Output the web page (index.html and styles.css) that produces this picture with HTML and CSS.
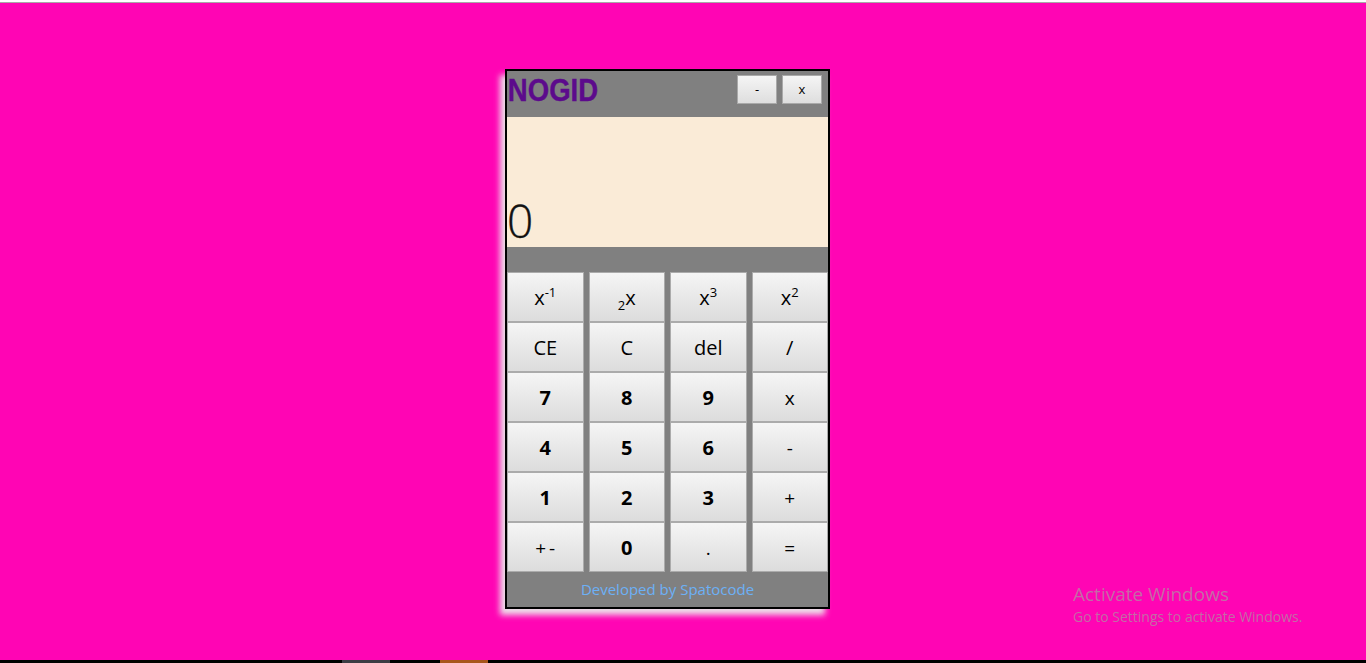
FILE: index.html
```html
<!DOCTYPE html>
<html>
<head>
<meta charset="utf-8">
<title>NOGID</title>
<link rel="stylesheet" href="styles.css">
</head>
<body>
<div class="topline"></div>
<main class="stage">
  <div class="calc">
    <header class="titlebar">
      <span class="logo">NOGID</span>
      <div class="winbtns">
        <button class="winbtn">-</button>
        <button class="winbtn">x</button>
      </div>
    </header>
    <section class="display"><span class="value">0</span></section>
    <div class="strip"></div>
    <div class="keys">
      <button class="key">x<sup>-1</sup></button>
      <button class="key"><sub>2</sub>x</button>
      <button class="key">x<sup>3</sup></button>
      <button class="key">x<sup>2</sup></button>
      <button class="key">CE</button>
      <button class="key">C</button>
      <button class="key">del</button>
      <button class="key">/</button>
      <button class="key num">7</button>
      <button class="key num">8</button>
      <button class="key num">9</button>
      <button class="key op">x</button>
      <button class="key num">4</button>
      <button class="key num">5</button>
      <button class="key num">6</button>
      <button class="key op">-</button>
      <button class="key num">1</button>
      <button class="key num">2</button>
      <button class="key num">3</button>
      <button class="key op">+</button>
      <button class="key op pm">+-</button>
      <button class="key num">0</button>
      <button class="key op">.</button>
      <button class="key op">=</button>
    </div>
    <footer class="credit">Developed by Spatocode</footer>
  </div>
</main>
<div class="watermark">
  <div class="wm-title">Activate Windows</div>
  <div class="wm-sub">Go to Settings to activate Windows.</div>
</div>
<div class="taskbar">
  <span class="task task-a"></span>
  <span class="task task-b"></span>
</div>
</body>
</html>
```

FILE: styles.css
```css
* { box-sizing: border-box; }
html, body { margin: 0; padding: 0; }
body {
  background: #ff05b4;
  height: 663px;
  display: flex;
  flex-direction: column;
  overflow: hidden;
  font-family: "Open Sans", "Noto Sans", sans-serif;
  position: relative;
}
.topline {
  height: 3px;
  background: #ffffff;
  border-bottom: 1px solid #a9a9a9;
  flex: none;
}
.stage {
  flex: 1;
  padding-top: 66px;
  padding-left: 505px;
}
.calc {
  width: 325px;
  height: 540px;
  border: 2px solid #000;
  background: #808080;
  display: flex;
  flex-direction: column;
  box-shadow: -5px 6px 6px rgba(235, 235, 235, 0.95);
}
.titlebar {
  height: 46px;
  flex: none;
  display: flex;
  align-items: flex-start;
  justify-content: space-between;
  background: #808080;
}
.logo {
  font-family: "Liberation Sans", Arial, sans-serif;
  font-weight: bold;
  font-size: 32px;
  color: #5c0a8c;
  line-height: 1;
  padding-top: 3px;
  padding-left: 1px;
  transform: scaleX(0.86);
  transform-origin: left center;
  -webkit-text-stroke: 0.4px #5c0a8c;
}
.winbtns {
  display: flex;
  gap: 5px;
  padding-top: 4px;
  padding-right: 6px;
}
.winbtn {
  width: 40px;
  height: 29px;
  border: 1px solid #a9a9a9;
  background: linear-gradient(#f5f5f5, #dedede);
  font-family: "Open Sans", sans-serif;
  font-size: 13px;
  color: #000;
  padding: 0;
  line-height: 1;
}
.display {
  height: 130px;
  flex: none;
  background: #faebd7;
  display: flex;
  align-items: flex-end;
  padding-bottom: 4px;
}
.value {
  font-family: "Open Sans", sans-serif;
  font-weight: 300;
  font-size: 46px;
  line-height: 46px;
  color: #111;
  -webkit-text-stroke: 0.4px #111;
}
.strip {
  height: 25px;
  flex: none;
  background: #808080;
}
.keys {
  height: 300px;
  flex: none;
  display: grid;
  grid-template-columns: repeat(4, 1fr);
  grid-template-rows: repeat(6, 50px);
  column-gap: 5px;
  background: #808080;
}
.key {
  border: 1px solid #ababab;
  background: linear-gradient(#f5f5f5, #dcdcdc);
  font-family: "Open Sans", sans-serif;
  font-size: 20px;
  color: #000;
  padding: 2px 0 0;
  line-height: 1;
}
.key.num { font-weight: 700; }
.key.op { font-size: 19px; }
.key.pm { letter-spacing: 3px; padding-left: 3px; }
.key sup { font-size: 13px; vertical-align: 8px; line-height: 0; }
.key sub { font-size: 13px; vertical-align: -5px; line-height: 0; }
.credit {
  flex: 1;
  display: flex;
  align-items: center;
  justify-content: center;
  font-family: "Open Sans", sans-serif;
  font-size: 15px;
  color: #6cb0f6;
  padding-bottom: 2px;
}
.watermark {
  position: absolute;
  left: 1073px;
  top: 582px;
  font-family: "Open Sans", "Noto Sans", sans-serif;
  color: #c46aa6;
}
.wm-title { font-size: 19px; line-height: 24px; }
.wm-sub { font-size: 14px; line-height: 22px; }
.taskbar {
  height: 3px;
  flex: none;
  background: #000;
  display: flex;
}
.task { display: block; height: 3px; width: 48px; }
.task-a { margin-left: 342px; background: #3c3c44; }
.task-b { margin-left: 50px; background: #a8561c; }
```
